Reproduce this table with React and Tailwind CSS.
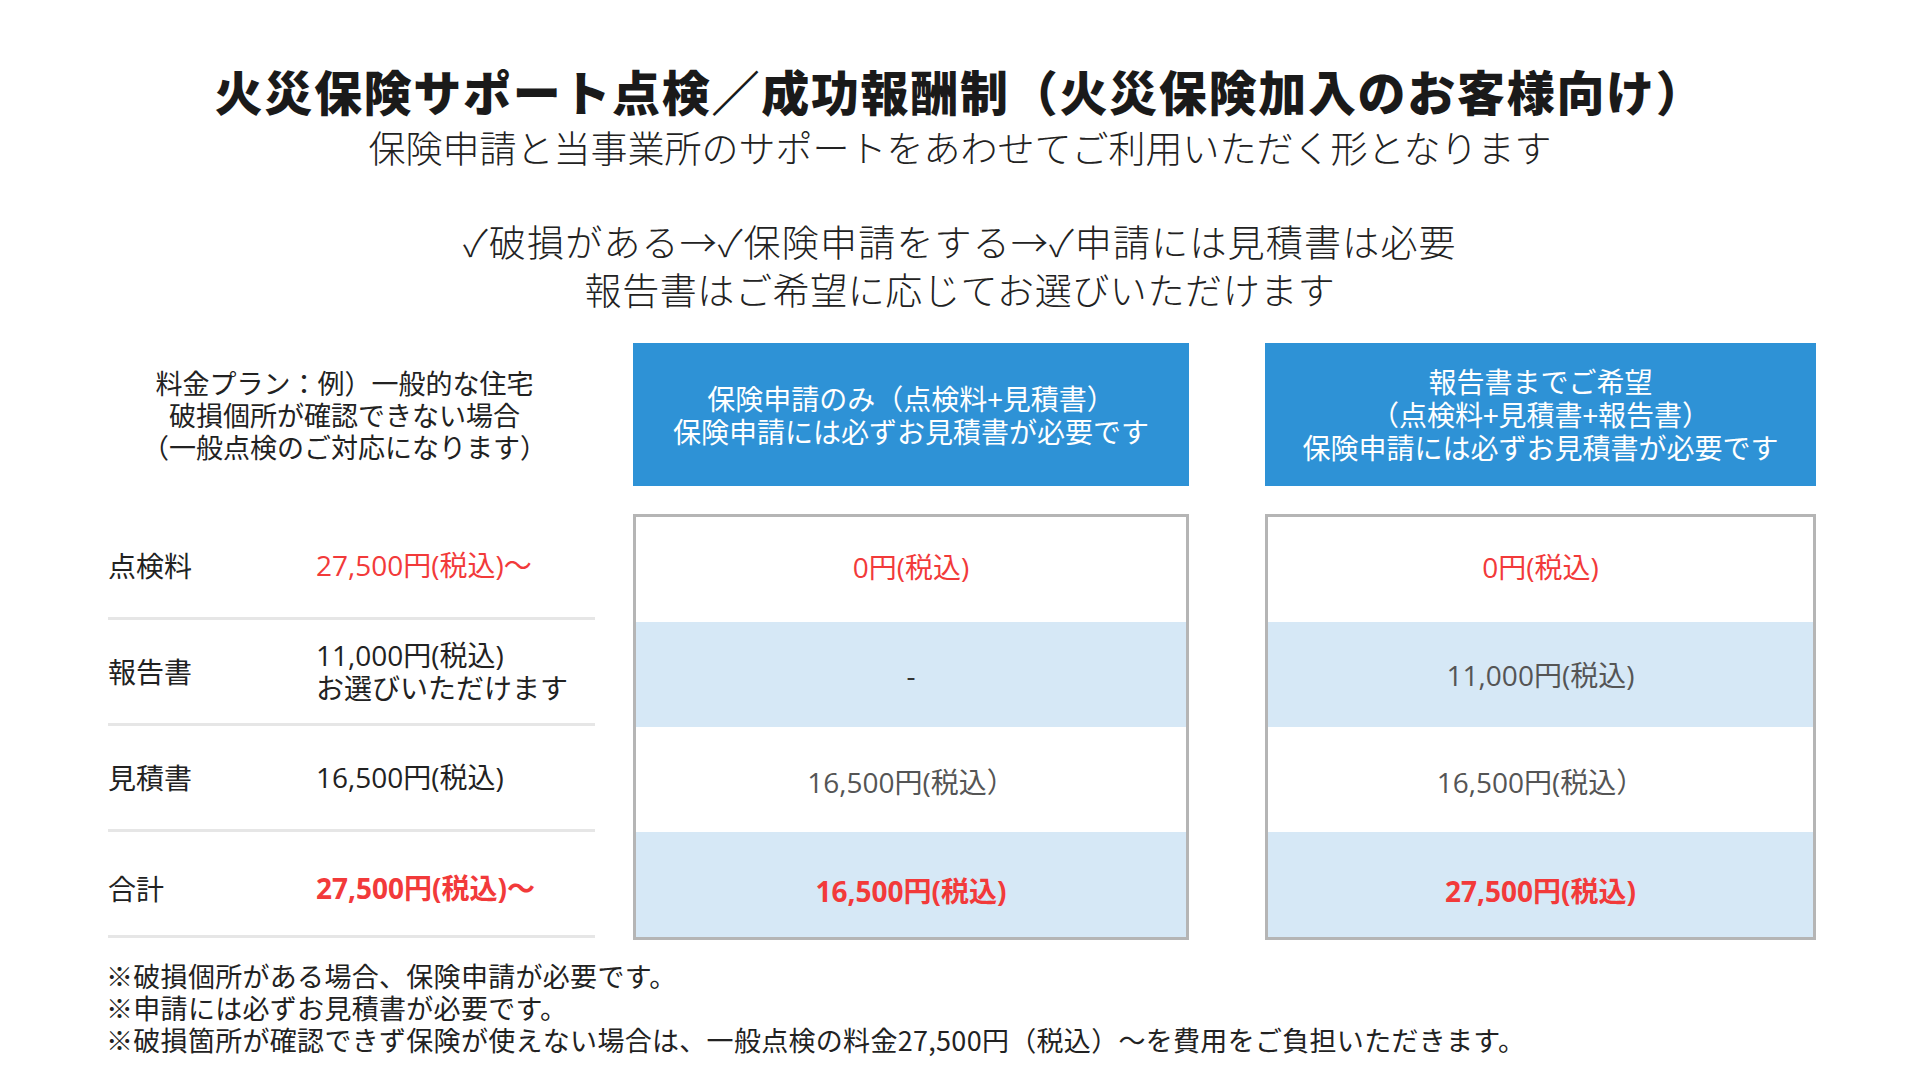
import React from "react";

const font = { fontFamily: '"Noto Sans CJK JP", "Noto Sans", sans-serif' };
const numFont = { fontFamily: '"Open Sans", "Noto Sans CJK JP", sans-serif' };

const leftRows = [
  { label: "点検料", value: ["27,500円(税込)〜"], cls: "text-[#f23a3a]" },
  { label: "報告書", value: ["11,000円(税込)", "お選びいただけます"], cls: "text-[#222]" },
  { label: "見積書", value: ["16,500円(税込)"], cls: "text-[#222]" },
  { label: "合計", value: ["27,500円(税込)〜"], cls: "text-[#f23a3a] font-bold pt-[10px]", last: true },
];

const plans = [
  {
    width: "w-[556px]",
    head: ["保険申請のみ（点検料+見積書）", "保険申請には必ずお見積書が必要です"],
    cells: [
      { text: "0円(税込)", cls: "text-[#f23a3a] pb-[6px]" },
      { text: "-", cls: "text-[#333]" },
      { text: "16,500円(税込）", cls: "text-[#555] pt-[4px]" },
      { text: "16,500円(税込)", cls: "text-[#f23a3a] font-bold pt-[12px]" },
    ],
  },
  {
    width: "w-[551px]",
    head: ["報告書までご希望", "（点検料+見積書+報告書）", "保険申請には必ずお見積書が必要です"],
    cells: [
      { text: "0円(税込)", cls: "text-[#f23a3a] pb-[6px]" },
      { text: "11,000円(税込)", cls: "text-[#555]" },
      { text: "16,500円(税込）", cls: "text-[#555] pt-[4px]" },
      { text: "27,500円(税込)", cls: "text-[#f23a3a] font-bold pt-[12px]" },
    ],
  },
];

const PlanTable = ({ plan }) => (
  <div className={`${plan.width} flex flex-col`}>
    <div className="h-[143px] bg-[#2e92d6] flex flex-col items-center justify-center text-white text-[28px] leading-[33px]">
      {plan.head.map((l) => (
        <span key={l}>{l}</span>
      ))}
    </div>
    <div className="mt-[28px] border-[3px] border-[#b5b5b5] flex flex-col">
      {plan.cells.map((c, i) => (
        <div
          key={i}
          className={`h-[105px] flex items-center justify-center text-[28px] ${
            i % 2 === 1 ? "bg-[#d6e8f6]" : "bg-white"
          } ${c.cls}`}
          style={numFont}
        >
          {c.text}
        </div>
      ))}
    </div>
  </div>
);

export default function App() {
  return (
    <div className="w-[1920px] h-[1080px] bg-white text-[#222] overflow-hidden" style={font}>
      <div className="flex flex-col items-center pt-[62px]">
        <h1 className="text-[48px] leading-[56px] font-black text-[#1a1a1a] tracking-[1.7px]">
          火災保険サポート点検／成功報酬制（火災保険加入のお客様向け）
        </h1>
        <p className="mt-[5px] text-[37px] leading-[48px] font-light">
          保険申請と当事業所のサポートをあわせてご利用いただく形となります
        </p>
        <div className="mt-[46px] flex flex-col items-center text-[37px] leading-[48px] font-light">
          <span className="tracking-[1.2px]">✓破損がある→✓保険申請をする→✓申請には見積書は必要</span>
          <span className="tracking-[0.6px]">報告書はご希望に応じてお選びいただけます</span>
        </div>
      </div>

      <div className="mt-[30px] pl-[108px] flex">
        <div className="w-[487px] mr-[38px] flex flex-col">
          <div className="h-[143px] flex flex-col items-center justify-center text-[27px] leading-[32px] pr-[14px]">
            <span>料金プラン：例）一般的な住宅</span>
            <span>破損個所が確認できない場合</span>
            <span>（一般点検のご対応になります）</span>
          </div>
          <div className="mt-[28px] flex flex-col">
            {leftRows.map((r) => (
              <div
                key={r.label}
                className="h-[106px] border-b-[3px] border-[#e6e6e6] flex items-center text-[28px] leading-[33px]"
              >
                <span className={`w-[208px] ${r.last ? "pt-[10px]" : ""}`}>{r.label}</span>
                <span className={`flex flex-col ${r.cls}`} style={numFont}>
                  {r.value.map((v) => (
                    <span key={v}>{v}</span>
                  ))}
                </span>
              </div>
            ))}
          </div>
        </div>
        <PlanTable plan={plans[0]} />
        <div className="w-[76px]" />
        <PlanTable plan={plans[1]} />
      </div>

      <div className="mt-[20px] pl-[106px] flex flex-col text-[27px] leading-[32px] tracking-[0.3px]">
        <span>※破損個所がある場合、保険申請が必要です。</span>
        <span>※申請には必ずお見積書が必要です。</span>
        <span>※破損箇所が確認できず保険が使えない場合は、一般点検の料金27,500円（税込）〜を費用をご負担いただきます。</span>
      </div>
    </div>
  );
}
